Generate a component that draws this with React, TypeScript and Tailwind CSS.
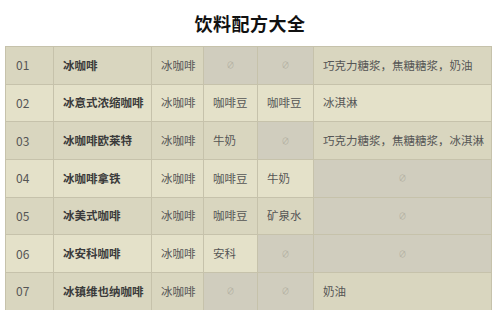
import React from 'react'

type Row = {
  no: string
  name: string
  base: string
  a: string | null
  b: string | null
  extra: string | null
}

const rows: Row[] = [
  { no: '01', name: '冰咖啡', base: '冰咖啡', a: null, b: null, extra: '巧克力糖浆，焦糖糖浆，奶油' },
  { no: '02', name: '冰意式浓缩咖啡', base: '冰咖啡', a: '咖啡豆', b: '咖啡豆', extra: '冰淇淋' },
  { no: '03', name: '冰咖啡欧莱特', base: '冰咖啡', a: '牛奶', b: null, extra: '巧克力糖浆，焦糖糖浆，冰淇淋' },
  { no: '04', name: '冰咖啡拿铁', base: '冰咖啡', a: '咖啡豆', b: '牛奶', extra: null },
  { no: '05', name: '冰美式咖啡', base: '冰咖啡', a: '咖啡豆', b: '矿泉水', extra: null },
  { no: '06', name: '冰安科咖啡', base: '冰咖啡', a: '安科', b: null, extra: null },
  { no: '07', name: '冰镇维也纳咖啡', base: '冰咖啡', a: null, b: null, extra: '奶油' }
]

const font = { fontFamily: '"Noto Sans CJK SC", "Noto Sans", sans-serif' }

const Cell = ({ value, odd, bold }: { value: string | null; odd: boolean; bold?: boolean }) => {
  if (value === null) {
    return (
      <td className="h-[37.67px] border border-[#c6c2ab] bg-[#d0cdbe] text-center align-middle text-[8px] text-[#b3b0a2]">
        ∅
      </td>
    )
  }
  return (
    <td
      className={`h-[37.67px] border border-[#c6c2ab] pl-[9px] align-middle text-[11.5px] whitespace-nowrap ${
        odd ? 'bg-[#d9d6bf]' : 'bg-[#e4e1c9]'
      } ${bold ? 'font-bold text-[#3a3a3a]' : 'text-[#555555]'}`}
    >
      {value}
    </td>
  )
}

export default function App() {
  return (
    <div className="w-[500px] h-[310px] overflow-hidden bg-white" style={font}>
      <div className="h-[46px] flex items-center justify-center">
        <h1 className="text-[18px] font-bold text-[#111] tracking-[0.5px]">饮料配方大全</h1>
      </div>
      <table className="ml-[5px] w-[486px] border-collapse border border-[#c6c2ab] table-fixed">
        <colgroup>
          <col className="w-[48px]" />
          <col className="w-[98px]" />
          <col className="w-[52px]" />
          <col className="w-[54px]" />
          <col className="w-[56px]" />
          <col className="w-[178px]" />
        </colgroup>
        <tbody>
          {rows.map((r, i) => {
            const odd = i % 2 === 0
            return (
              <tr key={r.no}>
                <td
                  className={`h-[37.67px] border border-[#c6c2ab] pl-[10px] align-middle text-[12px] text-[#555555] ${
                    odd ? 'bg-[#d9d6bf]' : 'bg-[#e4e1c9]'
                  }`}
                >
                  {r.no}
                </td>
                <Cell value={r.name} odd={odd} bold />
                <Cell value={r.base} odd={odd} />
                <Cell value={r.a} odd={odd} />
                <Cell value={r.b} odd={odd} />
                <Cell value={r.extra} odd={odd} />
              </tr>
            )
          })}
        </tbody>
      </table>
    </div>
  )
}
